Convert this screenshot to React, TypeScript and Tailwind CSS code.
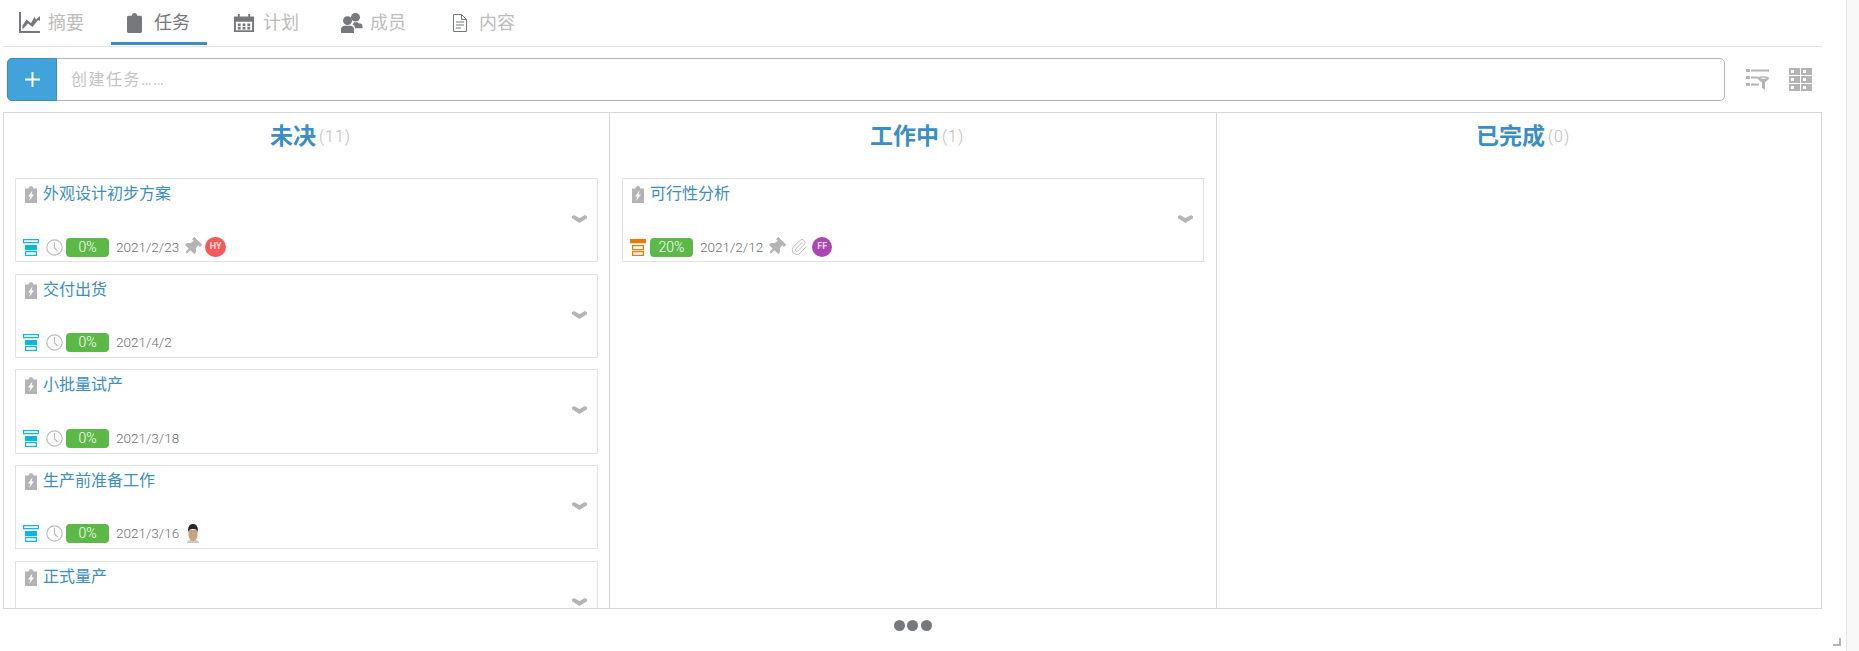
import { FaThumbtack } from "react-icons/fa"
import { Paperclip } from "lucide-react"

function ChartIcon() {
  return (
    <svg width="21" height="21" viewBox="0 0 21 21" fill="#77787b">
      <path d="M0 0h2v19h19v2H0z" />
      <path d="M3.500 17.500v-4l4-6 4.500 3.500 3.500-6 1.500 2.500 4-3.500v5L19 8l-5.500 7-4.500-3.500z" />
    </svg>
  )
}

function ClipboardIcon() {
  return (
    <svg width="15" height="20" viewBox="0 0 16 21" fill="#77787b" preserveAspectRatio="none">
      <path d="M1.500 3H5c.3-1.700 1.400-3 3-3s2.700 1.300 3 3h3.500c.8 0 1.500.7 1.500 1.500V19.500c0 .8-.7 1.500-1.500 1.500h-13C.7 21 0 20.300 0 19.500V4.500C0 3.700.7 3 1.500 3z" />
    </svg>
  )
}

function CalendarIcon() {
  return (
    <svg width="20" height="18" viewBox="0 0 21 21" fill="#77787b" preserveAspectRatio="none">
      <path fillRule="evenodd" d="M0 3h4V0h2v3h9V0h2v3h4v18H0zM2 9v10h17V9z" />
      <path d="M4 11h3v3H4zM9 11h3v3H9zM14 11h3v3h-3zM4 15h3v3H4zM9 15h3v3H9zM14 15h3v3h-3z" />
    </svg>
  )
}

function UsersIcon() {
  return (
    <svg width="22" height="20" viewBox="0 0 22 21" fill="#77787b" preserveAspectRatio="none">
      <circle cx="14.500" cy="4.500" r="4.500" />
      <circle cx="6.500" cy="8" r="4.500" />
      <path d="M0 21v-4c0-2 2-3.500 3.500-3.500h6c2 0 3.500 1.500 3.500 3.500v4z" />
      <path d="M14 16c0-2-1-3.500-2.500-4 1-1 1.500-2 1.500-2.500 1 .5 2.500.5 3.500 0 .2 1 .5 1.500 2 1.500s3 .5 3 2.500V16z" />
    </svg>
  )
}

function DocIcon() {
  return (
    <svg width="14" height="18" viewBox="0 0 14 18" fill="none" stroke="#77787b">
      <path d="M.5.500h8l5 5v12H.5z" />
      <path d="M8.500.5v5h5M3 8h8M3 11h8M3 14h5" />
    </svg>
  )
}

function TaskIcon() {
  return (
    <svg width="12" height="17" viewBox="0 0 12 17" className="shrink-0">
      <path fill="#b4b4b4" d="M0 2.500h3.500C3.700 1 4.700 0 6 0s2.300 1 2.500 2.500H12V17H0z" />
      <path fill="#fff" d="M7.500 4.500 3 10.500h2.500L4 15l5-6.500H6.500z" />
    </svg>
  )
}

function PriorityIcon({ color, filled }: { color: string; filled: number }) {
  // three stacked trays, the top one wider, one of them solid
  const rows = [
    { d: "M.6.6h14.800v3H.6z" },
    { d: "M2.600 6.600h10.800v4H2.600z" },
    { d: "M2.600 12.600h10.800v3.800H2.600z" },
  ]
  return (
    <svg width="16" height="17" viewBox="0 0 16 17" className="shrink-0">
      {rows.map((r, i) => (
        <path key={i} d={r.d} stroke={color} strokeWidth="1.200" fill={i === filled ? color : "none"} />
      ))}
    </svg>
  )
}

function ClockIcon() {
  return (
    <svg width="17" height="17" viewBox="0 0 17 17" fill="none" stroke="#bcbcbc" strokeWidth="1.200" className="shrink-0">
      <circle cx="8.500" cy="8.500" r="7.700" />
      <path d="M8.500 3v6l3 3" />
    </svg>
  )
}

function Chevron() {
  return (
    <svg width="15" height="8" viewBox="0 0 15 8" fill="#b5b5b5">
      <path d="M0 1.200 2 0l5.500 3L13 0l2 1.200v2L7.500 8 0 3.200z" />
    </svg>
  )
}

function FilterListIcon() {
  return (
    <svg width="23" height="23" viewBox="0 0 23 23" fill="#b4b4b4">
      <path d="M0 1h4v3H0zM5 1.500h18v2H5zM0 8h4v3H0zM5 8.500h7v2H5zM0 15h4v3H0zM5 15.500h8v2H5z" />
      <path fillRule="evenodd" d="M11.500 10c0-2.500 11.500-2.500 11.500 0 0 1.500-3 3.500-4 4.500V22l-3-2v-5.500c-1-1-4.500-3-4.500-4.500zm2.500 0c2 1 5 1 7 0-2-.8-5-.8-7 0z" />
    </svg>
  )
}

function GridIcon() {
  const cells = [0, 1, 2, 3, 4, 5]
  return (
    <div className="grid grid-cols-2 gap-x-[1px] gap-y-[1px]">
      {cells.map((c) => (
        <div key={c} className="w-[11px] h-[7px] bg-[#b4b4b4] flex items-center pl-[2px]">
          <div className="w-[3px] h-[3px] bg-white" />
        </div>
      ))}
    </div>
  )
}

function PhotoAvatar() {
  return (
    <svg width="14" height="19" viewBox="0 0 14 19" className="shrink-0">
      <path fill="#cfc8c0" d="M1 19c0-2.500 3-3.500 6-3.500s6 1 6 3.500z" />
      <path fill="#c6a182" d="M2.500 6h9v5c0 3-2 6-4.500 6s-4.500-3-4.500-6z" />
      <path fill="#2b2623" d="M2.200 8C1.500 2.500 4 0 7 0s5.500 2.500 4.800 8C11.300 6 10 5 7 5S2.700 6 2.200 8z" />
    </svg>
  )
}

type Task = {
  title: string
  color: string
  filled: number
  clock?: boolean
  progress?: string
  date?: string
  pin?: boolean
  clip?: boolean
  user?: "HY" | "FF" | "photo"
}

const pending: Task[] = [
  { title: "外观设计初步方案", color: "#0db7de", filled: 1, clock: true, progress: "0%", date: "2021/2/23", pin: true, user: "HY" },
  { title: "交付出货", color: "#0db7de", filled: 1, clock: true, progress: "0%", date: "2021/4/2" },
  { title: "小批量试产", color: "#0db7de", filled: 1, clock: true, progress: "0%", date: "2021/3/18" },
  { title: "生产前准备工作", color: "#0db7de", filled: 1, clock: true, progress: "0%", date: "2021/3/16", user: "photo" },
  { title: "正式量产", color: "#0db7de", filled: 1 },
]

const working: Task[] = [
  { title: "可行性分析", color: "#e97a00", filled: 0, progress: "20%", date: "2021/2/12", pin: true, clip: true, user: "FF" },
]

function TaskCard({ task }: { task: Task }) {
  return (
    <div className="h-[84.330px] mb-[11.330px] border border-[#e2e2e2] flex flex-col pl-[7px] pr-[10px] bg-white">
      <div className="flex items-start gap-[6px] ml-[2px] pt-[7px] h-[33px]">
        <TaskIcon />
        <span className="text-[16px] leading-[16px] text-[#3a8dc5]">{task.title}</span>
      </div>
      <div className="flex justify-end h-[14px] items-start pt-[3px]">
        <Chevron />
      </div>
      {task.date && (
        <div className="flex items-center mt-[11px] h-[20px]">
          <div className="w-[20px]">
            <PriorityIcon color={task.color} filled={task.filled} />
          </div>
          {task.clock && (
            <div className="w-[20px] ml-[3px]">
              <ClockIcon />
            </div>
          )}
          <span className="w-[43px] h-[19px] rounded-[4px] bg-[#5cb947] text-white text-[14px] font-light leading-[19px] text-center">
            {task.progress}
          </span>
          <span className="ml-[7px] text-[13.500px] font-light text-[#6f6f6f] leading-[19px]">{task.date}</span>
          {task.pin && <FaThumbtack className="ml-[4px] rotate-45 text-[#b4b4b4] w-[18px] h-[18px] shrink-0" />}
          {task.clip && <Paperclip className="ml-[5px] text-[#bcbcbc] w-[18px] h-[18px] shrink-0" strokeWidth={1.300} />}
          {task.user === "photo" && <div className="ml-[7px]"><PhotoAvatar /></div>}
          {task.user === "HY" && (
            <span className="ml-[4px] w-[21px] h-[20px] rounded-full bg-[#f55a5a] text-[#ffd9d9] text-[9px] font-bold flex items-center justify-center">HY</span>
          )}
          {task.user === "FF" && (
            <span className="ml-[4px] w-[20px] h-[20px] rounded-full bg-[#ab47b0] text-[#eed4ef] text-[9px] font-bold flex items-center justify-center">FF</span>
          )}
        </div>
      )}
    </div>
  )
}

function Column({ name, count, tasks, className }: { name: string; count: number; tasks: Task[]; className: string }) {
  return (
    <div className={`overflow-hidden ${className}`}>
      <div className="h-[65px] flex items-center justify-center gap-[3px] pb-[18px] pl-[8px]">
        <span className="text-[23px] font-bold text-[#3a8dc5] leading-none">{name}</span>
        <span className="text-[16px] font-light text-[#bbbbbb] tracking-[1px]">({count})</span>
      </div>
      {tasks.map((t) => (
        <TaskCard key={t.title} task={t} />
      ))}
    </div>
  )
}

export default function App() {
  const tabs = [
    { label: "摘要", icon: <ChartIcon />, gap: "gap-[8px]", space: "" },
    { label: "任务", icon: <ClipboardIcon />, gap: "gap-[12px]", space: "ml-[11px] w-[96px]", active: true },
    { label: "计划", icon: <CalendarIcon />, gap: "gap-[9px]", space: "ml-[11px]" },
    { label: "成员", icon: <UsersIcon />, gap: "gap-[7px]", space: "ml-[10px]" },
    { label: "内容", icon: <DocIcon />, gap: "gap-[12px]", space: "ml-[15px]" },
  ]

  return (
    <div className="h-screen flex overflow-hidden bg-white font-[Roboto,'Noto_Sans_CJK_SC',sans-serif]">
      <div className="flex-1 relative pl-[3px] pr-[24px]">
        <div className="flex h-[47px] border-b border-[#e2e2e2]">
          {tabs.map((tab) => (
            <div
              key={tab.label}
              className={`h-[45px] pl-4 pr-4 pt-[3px] flex items-center shrink-0 border-b-[3px] ${tab.gap} ${tab.space} ${tab.active ? "border-[#3a8dc5]" : "border-transparent"}`}
            >
              {tab.icon}
              <span className={`text-[18px] whitespace-nowrap ${tab.active ? "text-[#77787b]" : "text-[#bcbcbc]"}`}>{tab.label}</span>
            </div>
          ))}
        </div>

        <div className="flex items-center mt-[11px] ml-[4px] pr-[10px]">
          <div className="flex-1 flex h-[43px] border border-[#b5b5b5] rounded-[5px]">
            <button className="w-[50px] -m-[1px] mr-0 rounded-l-[5px] bg-[#42a3db] border border-[#3a8dc5] flex items-center justify-center">
              <svg width="15" height="15" viewBox="0 0 15 15" fill="#fff">
                <path d="M6.500 0h2v6.500H15v2H8.500V15h-2V8.500H0v-2h6.500z" />
              </svg>
            </button>
            <input
              placeholder="创建任务……"
              className="flex-1 pl-[14px] text-[16px] tracking-[1.500px] outline-none bg-transparent placeholder:text-[#c4c4c4]"
            />
          </div>
          <div className="ml-[21px] flex items-center gap-[20px]">
            <FilterListIcon />
            <GridIcon />
          </div>
        </div>

        <div className="mt-[11px] h-[497px] border border-[#d6d6d6] grid grid-cols-[606px_607px_1fr] overflow-hidden">
          <Column name="未决" count={11} tasks={pending} className="px-[11px] border-r border-[#d6d6d6]" />
          <Column name="工作中" count={1} tasks={working} className="px-3 border-r border-[#d6d6d6]" />
          <Column name="已完成" count={0} tasks={[]} className="px-3" />
        </div>

        <div className="flex justify-center gap-[2.500px] mt-[11px]">
          <span className="w-[11px] h-[11px] rounded-full bg-[#77787b]" />
          <span className="w-[11px] h-[11px] rounded-full bg-[#77787b]" />
          <span className="w-[11px] h-[11px] rounded-full bg-[#77787b]" />
        </div>

        <svg width="8" height="8" viewBox="0 0 8 8" fill="#b5b5b5" className="absolute right-[5px] bottom-[5px]">
          <path d="M6 0h2v8H0V6h6z" />
        </svg>
      </div>
      <div className="w-[13px] border-l border-[#e6e6e6] bg-[#f8f8f8]" />
    </div>
  )
}
